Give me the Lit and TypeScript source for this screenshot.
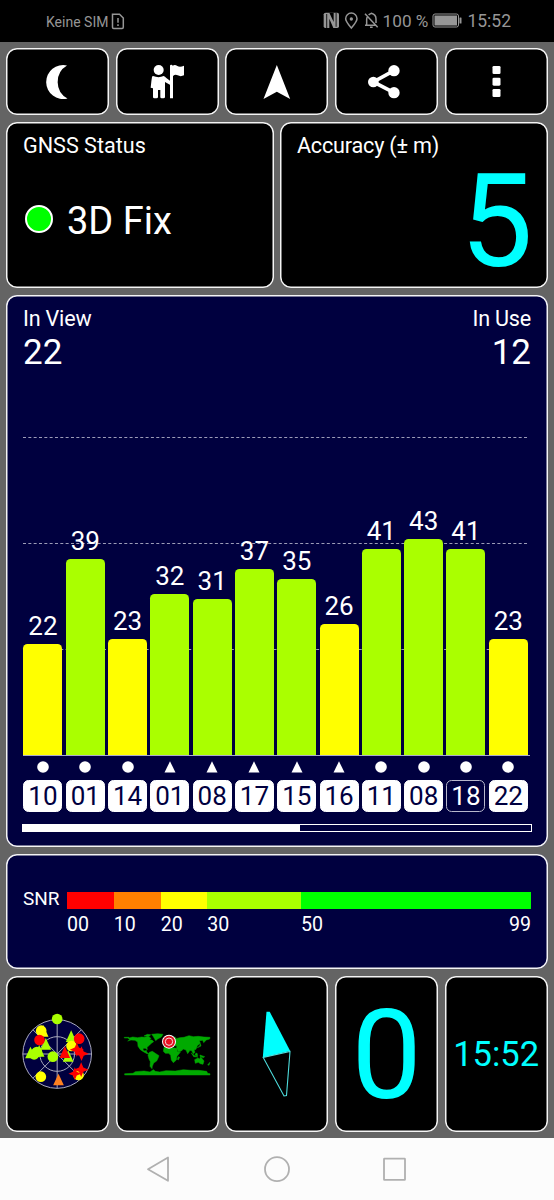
import { LitElement, html, svg, css } from "lit";
import { customElement } from "lit/decorators.js";
import { classMap } from "lit/directives/class-map.js";

interface Satellite {
  id: string;
  snr: number;
  kind: "circle" | "triangle";
  unused?: boolean;
}

const SATELLITES: Satellite[] = [
  { id: "10", snr: 22, kind: "circle" },
  { id: "01", snr: 39, kind: "circle" },
  { id: "14", snr: 23, kind: "circle" },
  { id: "01", snr: 32, kind: "triangle" },
  { id: "08", snr: 31, kind: "triangle" },
  { id: "17", snr: 37, kind: "triangle" },
  { id: "15", snr: 35, kind: "triangle" },
  { id: "16", snr: 26, kind: "triangle" },
  { id: "11", snr: 41, kind: "circle" },
  { id: "08", snr: 43, kind: "circle" },
  { id: "18", snr: 41, kind: "circle", unused: true },
  { id: "22", snr: 23, kind: "circle" },
];

const PX_PER_DB = 5.035;

const SCALE = [
  { label: "00", color: "#ff0000", span: 46.7 },
  { label: "10", color: "#ff8000", span: 47 },
  { label: "20", color: "#ffff00", span: 46.5 },
  { label: "30", color: "#aaff00", span: 93.8 },
  { label: "50", color: "#00ff00", span: 230, end: "99" },
];

const star = (x: number, y: number, r = 18) => {
  const k = r * 0.3;
  return svg`<path fill="#f00" d="M${x} ${y - r}L${x + k} ${y - k}L${x + r} ${y}L${x + k} ${y + k}L${x} ${y + r}L${x - k} ${y + k}L${x - r} ${y}L${x - k} ${y - k}Z"/>`;
};
const dot = (x: number, y: number, c: string) => svg`<circle cx=${x} cy=${y} r="16" fill=${c} />`;
const tri = (x: number, y: number, c: string) =>
  svg`<path fill=${c} d="M${x} ${y - 18}L${x + 16} ${y + 17}H${x - 16}Z"/>`;

@customElement("gps-status-bar")
class GpsStatusBar extends LitElement {
  static styles = css`
    :host {
      display: flex;
      align-items: flex-start;
      justify-content: space-between;
      box-sizing: border-box;
      height: 41.5px;
      padding: 0 43px 0 46px;
      background: #000;
      color: #969696;
    }
    .side { display: flex; align-items: center; height: 42px; }
    .sim { font-size: 14px; line-height: 18px; margin-right: 3px; padding-top: 1px; }
    .pct { font-size: 17.2px; margin-right: -1px; }
    .time { font-size: 17.5px; }
    svg { display: block; }
  `;
  render() {
    return html`
      <div class="side">
        <span class="sim">Keine SIM</span>
        <svg width="14" height="17" viewBox="0 0 14 17" fill="none" stroke="#969696" stroke-width="1.5">
          <path d="M1.7 1.2H8.5L12.3 5V14.3Q12.3 15.5 11.1 15.5H2.7Q1.5 15.5 1.5 14.3V1.2Z" />
          <path d="M7 5V9.7M7 11.3V13" />
        </svg>
      </div>
      <div class="side">
        <svg width="60" height="18" viewBox="138 36 180 54">
          <path fill="#969696" d="M146 38H181Q186 38 186 43V79Q186 84 181 84H145Q140 84 140 79V43Q140 38 146 38Z" />
          <path fill="#000" d="M148 84V42H150.500V84ZM176 38H178.500V80H176ZM157 84V56L169 84ZM170 38V66L157 38Z" />
          <g fill="none" stroke="#969696" stroke-width="4.5">
            <path d="M223 84C213 72 206 64 206 56A17 17 0 0 1 240 56C240 64 233 72 223 84Z" />
            <path d="M264 41L302 82M264 76H294M269 75V58C269 53 271 50 273 48M275 45C278 42 280 42 283 40C291 42 297 48 297 57V69M279 82H287" />
          </g>
          <circle cx="223" cy="57" r="5" fill="#969696" />
        </svg>
        <span class="pct">100 %</span>
        <svg width="40" height="18" viewBox="-1 0 40 18">
          <rect x="5" y="2" width="25.5" height="13" rx="2" fill="none" stroke="#969696" />
          <rect x="6.5" y="3.5" width="22.5" height="10" fill="#969696" />
          <rect x="31.5" y="5.5" width="2" height="6" rx="0.5" fill="#969696" />
        </svg>
        <span class="time">15:52</span>
      </div>
    `;
  }
}

@customElement("satellite-chart")
class SatelliteChart extends LitElement {
  static styles = css`
    :host { display: block; }
    .plot {
      position: relative;
      height: 386px;
      display: flex;
      align-items: flex-end;
      gap: 3.3px;
      border-bottom: 1px solid #aaaacc;
      width: 507.5px;
      box-sizing: border-box;
      padding-left: 0.5px;
    }
    .grid { position: absolute; inset: 0; width: 100%; height: 100%; }
    .col { position: relative; width: 39px; flex: none; text-align: center; }
    .value { font-size: 26px; line-height: 30px; margin-bottom: 3px; }
    .bar { border-radius: 4.5px 4.5px 0 0; background: #aaff00; }
    .bar.low { background: #ffff00; }
    .labels { display: flex; gap: 3.3px; margin-top: 5px; padding-left: 0.5px; }
    .sat { width: 39px; flex: none; }
    .mark { display: block; margin: 0 auto 7px; }
    .badge {
      box-sizing: border-box;
      height: 32px;
      border: 1px solid #fff;
      border-radius: 5.5px;
      background: #fff;
      color: #00003f;
      font-size: 26px;
      line-height: 30px;
      text-align: center;
    }
    .badge.unused { background: none; color: #fff; border-color: #b8b8cc; }
    .track { box-sizing: border-box; margin: 12px -1px 0; height: 8px; width: 510px; border: 1px solid #fff; }
    .thumb { height: 100%; width: 277px; background: #fff; }
  `;
  render() {
    return html`
      <div class="plot">
        <svg class="grid" stroke="#9c9cb8" stroke-width="1" stroke-dasharray="3 2.33">
          ${[67.5, 173.5, 279.5].map((y) => svg`<line x1="0" x2="505.500" y1=${y} y2=${y} />`)}
        </svg>
        ${SATELLITES.map(
          (s) => html`<div class="col">
            <div class="value">${s.snr}</div>
            <div class=${classMap({ bar: true, low: s.snr < 30 })} style="height:${s.snr * PX_PER_DB}px"></div>
          </div>`
        )}
      </div>
      <div class="labels">
        ${SATELLITES.map(
          (s) => html`<div class="sat">
            <svg class="mark" width="12" height="12" viewBox="0 0 12 12" fill="#fff">
              ${s.kind === "circle" ? svg`<circle cx="6" cy="6" r="5.8" />` : svg`<path d="M6 0.3L11.5 11.6H0.5Z" />`}
            </svg>
            <div class=${classMap({ badge: true, unused: !!s.unused })}>${s.id}</div>
          </div>`
        )}
      </div>
      <div class="track"><div class="thumb"></div></div>
    `;
  }
}

@customElement("app-root")
class AppRoot extends LitElement {
  static styles = css`
    :host {
      display: flex;
      flex-direction: column;
      width: 554px;
      height: 1200px;
      overflow: hidden;
      background: #646464;
      color: #fff;
      font-family: Roboto, "Liberation Sans", sans-serif;
    }
    svg { display: block; }
    .body {
      display: flex;
      flex-direction: column;
      gap: 6.5px;
      height: 1096.5px;
      box-sizing: border-box;
      padding: 6.5px 6.3px 6px;
    }
    .row { display: flex; gap: 6.6px; }
    .card {
      flex: 1;
      min-width: 0;
      box-sizing: border-box;
      background: #000;
      border-radius: 11px;
      box-shadow: inset 0 0 0 1.5px #f4f4f4;
    }
    .tools { height: 67px; }
    .status { height: 166.5px; }
    .navy { background: #00003f; flex: none; }
    .info { padding: 11px 16.7px 0; display: flex; flex-direction: column; }
    .title { font-size: 21.6px; line-height: 26px; }
    .tight { letter-spacing: -0.2px; }
    .fix { display: flex; align-items: center; gap: 14px; margin-top: 39px; font-size: 38px; line-height: 46px; }
    .led { box-sizing: border-box; width: 28px; height: 28px; border-radius: 50%; border: 2px solid #fff; background: #0f0; margin-top: -3px; margin-left: 2px; }
    .big { color: #0ff; font-size: 130px; line-height: 120px; text-align: right; margin: 3px -2px 0 0; }
    .chart { height: 552.5px; padding: 11px 16.7px 0; }
    .heads { display: flex; justify-content: space-between; }
    .right { text-align: right; }
    .count { font-size: 35px; line-height: 42px; margin-top: 0; }
    .plotarea { display: block; margin-top: -3.5px; }
    .snr { height: 115.5px; display: flex; gap: 8px; padding: 38px 16.7px 0; font-size: 19.6px; }
    .snrname { line-height: 17px; width: 36px; font-size: 19px; margin-top: -2px; }
    .scale { display: flex; width: 464px; }
    .step { height: 17px; }
    .marks { display: flex; justify-content: space-between; line-height: 30px; padding-top: 1px; }
    .minis { height: 156px; }
    .mini { display: flex; align-items: center; justify-content: center; color: #0ff; }
    .speed { font-size: 125px; line-height: 127px; padding-top: 3px; }
    .clock { font-size: 34.5px; padding-top: 1px; }
    .nav { flex: 1; background: #fcfcfc; }
  `;

  private toolIcons() {
    return [
      svg`<path d="M202.5 196.500A51 51 0 1 0 204 295.500A57 57 0 0 1 202.5 196.500Z"/>`,
      svg`<circle cx="476" cy="210" r="15"/>
        <path d="M459 228Q476 235 491 228Q495 229 499 234L511 243V255L495 246V291Q495 295 490 295H485Q481 295 481 291V270H474V291Q474 295 469 295H463Q459 295 459 291V265L452 263Q454 242 456 231Q457 228 459 228Z"/>
        <path d="M510 197Q510 194 514 194Q517 194 518 197Q525 193 532 198Q540 203 552 197V226Q542 231 533 226Q526 222 519 228V295H510Z"/>`,
      svg`<path d="M832 195L872 297L832 275L792 297Z"/>`,
      svg`<path d="M1182 212L1120 246L1182 278" fill="none" stroke="#fff" stroke-width="11"/><circle cx="1120" cy="246" r="16"/><circle cx="1182" cy="212" r="17"/><circle cx="1182" cy="278" r="17"/>`,
      svg`<rect x="1476" y="198" width="24" height="24" rx="4"/><rect x="1476" y="233" width="24" height="24" rx="4"/><rect x="1476" y="267" width="24" height="24" rx="4"/>`,
    ];
  }

  private skyView() {
    return html`<svg width="103" height="156" viewBox="19.5 -72 309 468">
      <circle cx="173" cy="162" r="103" fill="#00003f" />
      <g fill="none" stroke="#aaaabd" stroke-width="3">
        <circle cx="173" cy="162" r="103" />
        <circle cx="173" cy="162" r="52" />
        <path d="M173 59V265M70 162H276M100 89L246 235M246 89L100 235" />
      </g>
      ${tri(131, 93, "#ff0")}${dot(125, 92, "#ff0")}${dot(173, 57, "#af0")}
      ${tri(139, 132, "#af0")}${dot(120, 120, "#f00")}
      ${tri(93, 158, "#af0")}${tri(119, 153, "#af0")}${dot(104, 163, "#af0")}${dot(112, 156, "#af0")}
      ${tri(215, 109, "#af0")}${dot(216, 138, "#ff0")}${dot(239, 116, "#f00")}
      ${star(232, 149, 21)}${star(246, 161, 22)}
      ${tri(206, 168, "#af0")}${tri(196, 157, "#f00")}${dot(160, 170, "#af0")}
      ${dot(124, 230, "#ff0")}${dot(237, 225, "#ff0")}${star(245, 209, 22)}${star(226, 221, 19)}
      ${tri(177, 239, "#ff8020")}
    </svg>`;
  }

  private worldMap() {
    return html`<svg width="103" height="156" viewBox="3 -132 309 468">
      <g fill="#00aa00" stroke="#00aa00" stroke-width="1.5">
        <path d="M28 52H42V54H28Z" />
        <path d="M40 55L53 51L68 53L80 51L89 52L99 49L108 55L104 60L111 60L116 65L109 70L104 75L96 82L97 89L91 85L85 85L84 91L90 93L94 91L95 96L101 101L96 101L85 95L76 89L69 79L68 66L60 61L48 60L38 63L44 60Z" />
        <path d="M87 48L97 43L107 44L103 49Z" />
        <path d="M110 43L128 41L144 43L139 51L128 57L122 62L118 55L114 48Z" />
        <path d="M103 97L112 94L121 100L132 107L129 115L125 123L116 129L112 139L111 146L105 139L106 125L102 117L99 106Z" />
        <path d="M147 82L159 79L173 83L185 85L188 96L196 97L186 109L184 120L175 128L169 120L167 106L161 100L151 100L145 94Z" />
        <path d="M190 110L194 112L190 120L187 118Z" />
        <path d="M147 73L154 71L153 66L165 64L161 58L170 51L182 52L180 57L194 53L207 52L222 47L235 50L250 49L267 51L285 52L284 57L274 60L266 68L263 61L253 62L256 70L247 77L243 88L237 90L240 97L235 101L230 92L225 91L218 101L213 90L205 87L199 93L191 96L185 85L185 77L175 78L163 74L157 80L148 79Z" />
        <path d="M149 61L154 60L157 67L150 68ZM143 57L149 55L148 59Z" />
        <path d="M229 99L240 108L249 111L236 110ZM240 102L246 99L248 107L242 107ZM255 105L269 110L265 113L255 109ZM247 83L254 78L256 71L258 78Z" />
        <path d="M239 119L249 114L254 117L257 110L267 123L264 133L256 131L250 127L241 130ZM278 134L285 127L282 136Z" />
        <path d="M29 161L54 160L61 155L87 153L105 156L115 149L121 154L134 156L153 152L181 153L205 149L228 151L251 151L275 154L278 160L285 161V165H29Z" />
      </g>
      <circle cx="162" cy="65" r="21" fill="#fff" />
      <circle cx="162" cy="65" r="18" fill="#df1020" />
      <circle cx="162" cy="65" r="11" fill="none" stroke="#f6dada" stroke-width="3" />
      <circle cx="162" cy="65" r="6" fill="#f01020" />
    </svg>`;
  }

  render() {
    return html`
      <gps-status-bar></gps-status-bar>
      <div class="body">
        <div class="row tools">
          ${this.toolIcons().map(
            (icon, i) => html`<div class="card">
              <svg width="103" height="67" viewBox="${19.5 + i * 328.5} 144 309 201" fill="#fff">${icon}</svg>
            </div>`
          )}
        </div>
        <div class="row status">
          <div class="card info">
            <div class="title">GNSS Status</div>
            <div class="fix"><span class="led"></span><span>3D Fix</span></div>
          </div>
          <div class="card info">
            <div class="title tight">Accuracy (± m)</div>
            <div class="big">5</div>
          </div>
        </div>
        <div class="card navy chart">
          <div class="heads">
            <div><div class="title tight">In View</div><div class="count">22</div></div>
            <div class="right"><div class="title tight">In Use</div><div class="count">12</div></div>
          </div>
          <satellite-chart class="plotarea"></satellite-chart>
        </div>
        <div class="card navy snr">
          <div class="snrname">SNR</div>
          <div class="scale">
            ${SCALE.map(
              (s) => html`<div style="width:${s.span}px">
                <div class="step" style="background:${s.color}"></div>
                <div class="marks"><span>${s.label}</span><span>${s.end ?? ""}</span></div>
              </div>`
            )}
          </div>
        </div>
        <div class="row minis">
          <div class="card mini">${this.skyView()}</div>
          <div class="card mini">${this.worldMap()}</div>
          <div class="card mini">
            <svg width="103" height="156" viewBox="225.5 976 103 156">
              <path d="M267 1011.7H270.2L290.7 1051L263.3 1057.5Z" fill="#0ff" />
              <path d="M290.500 1051.500L287 1095.500L284.500 1096L263.700 1057.500Z" fill="none" stroke="#4edede" stroke-width="1.1" />
            </svg>
          </div>
          <div class="card mini speed">0</div>
          <div class="card mini clock">15:52</div>
        </div>
      </div>
      <div class="nav">
        <svg width="554" height="62" viewBox="0 1138 554 62" fill="none" stroke="#b0b0b0" stroke-width="1.8" stroke-linejoin="round">
          <path d="M168 1157.500V1180.800L148 1169.200Z" />
          <circle cx="277" cy="1169.200" r="12" />
          <rect x="384" y="1158.700" width="21" height="21.200" rx="0.500" />
        </svg>
      </div>
    `;
  }
}
